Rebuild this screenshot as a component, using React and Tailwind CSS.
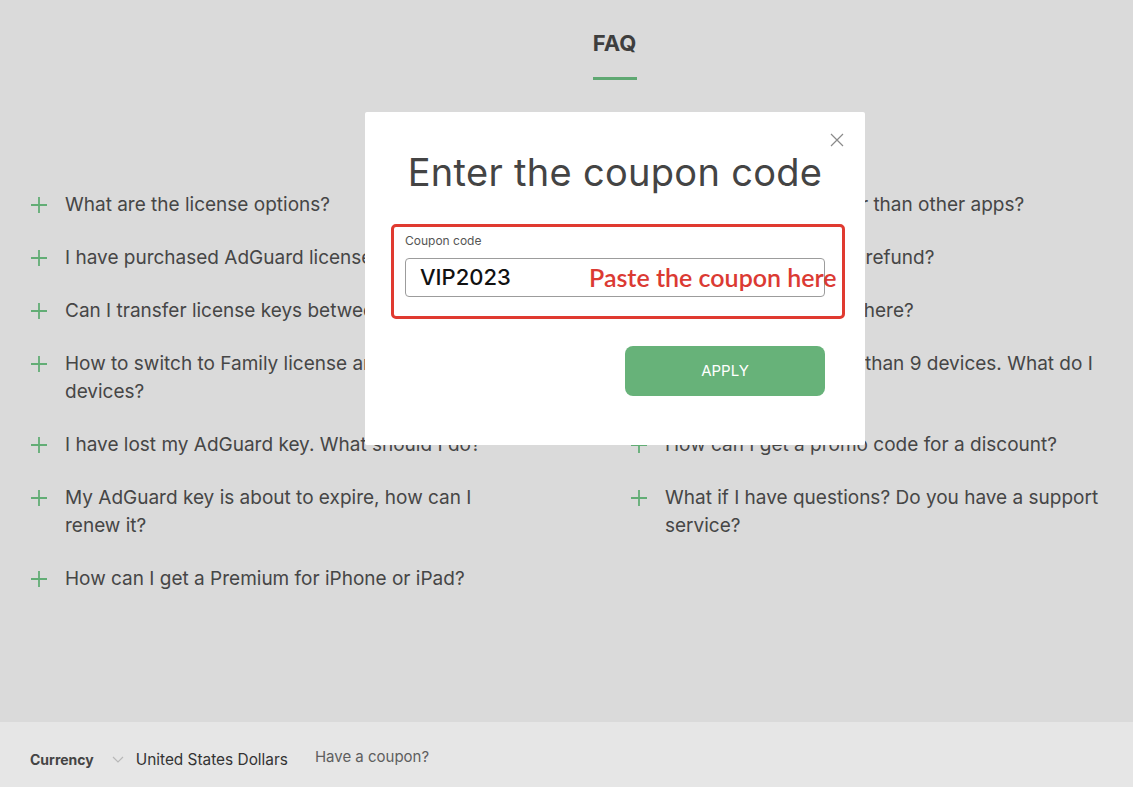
import React from 'react';

const leftItems = [
  'What are the license options?',
  'I have purchased AdGuard license. What next?',
  'Can I transfer license keys between devices?',
  'How to switch to Family license and add more devices?',
  'I have lost my AdGuard key. What should I do?',
  'My AdGuard key is about to expire, how can I renew it?',
  'How can I get a Premium for iPhone or iPad?',
];

const rightItems = [
  'Why is AdGuard better than other apps?',
  'How can I request my refund?',
  'Can I pay with PayPal here?',
  'I want to secure more than 9 devices. What do I do?',
  'How can I get a promo code for a discount?',
  'What if I have questions? Do you have a support service?',
];

function Plus() {
  return (
    <svg width="18" height="18" viewBox="0 0 18 18" className="shrink-0 mt-[5px]">
      <path d="M9 1v16M1 9h16" stroke="#62ad75" strokeWidth="1.8" fill="none" />
    </svg>
  );
}

function FaqItem({ text }) {
  return (
    <div className="flex gap-[17px]">
      <Plus />
      <span className="w-[445px] text-[19px] leading-[28px] text-[#464646]">{text}</span>
    </div>
  );
}

export default function App() {
  return (
    <div
      className="relative h-[787px] w-[1133px] overflow-hidden bg-[#dadada] flex flex-col"
      style={{ fontFamily: 'Inter, "Noto Sans", sans-serif' }}
    >
      <div className="flex-1">
        <div className="flex flex-col items-center pt-[29px] pl-[96px]">
          <h2 className="text-[22px] leading-[28px] font-bold text-[#3e3e3e]">FAQ</h2>
          <div className="mt-[20px] h-[3px] w-[44px] bg-[#5fa872]" />
        </div>
        <div className="grid grid-cols-[480px_480px] gap-x-[120px] pl-[30px] pt-[111px]">
          <div className="flex flex-col gap-[25px]">
            {leftItems.map((t) => (
              <FaqItem key={t} text={t} />
            ))}
          </div>
          <div className="flex flex-col gap-[25px]">
            {rightItems.map((t) => (
              <FaqItem key={t} text={t} />
            ))}
          </div>
        </div>
      </div>

      <footer className="h-[65px] bg-[#e6e6e6] flex items-center pl-[30px] pt-[10px] text-[15.4px]">
        <span className="text-[14px] font-bold text-[#444]">Currency</span>
        <svg width="12" height="8" viewBox="0 0 12 8" className="ml-[18px] mr-[12px]">
          <path d="M1 1l5 5 5-5" stroke="#b8b8b8" strokeWidth="1.2" fill="none" />
        </svg>
        <span className="text-[#333]">United States Dollars</span>
        <span className="ml-[27px] -mt-[4px] text-[15px] text-[#5e5e5e]">Have a coupon?</span>
      </footer>

      <div className="absolute left-[365px] top-[112px] w-[500px] bg-white rounded-[2px] px-[40px] pt-[37px] pb-[49px]">
        <button className="absolute right-[21px] top-[21px] w-[14px] h-[14px]">
          <svg width="14" height="14" viewBox="0 0 14 14">
            <path d="M1 1l12 12M13 1L1 13" stroke="#8a8a8a" strokeWidth="1.2" fill="none" />
          </svg>
        </button>
        <h1 className="text-center whitespace-nowrap text-[38px] leading-[46px] text-[#444] tracking-[0.3px]">
          Enter the coupon code
        </h1>
        <div className="mt-[38px] text-[12px] leading-[16px] text-[#555]">Coupon code</div>
        <div className="mt-[9px] h-[39px] border border-[#9c9c9c] rounded-[4px] flex items-center pl-[14px]">
          <span className="text-[22px] font-medium text-[#111]">VIP2023</span>
        </div>
        <div className="mt-[49px] flex justify-end">
          <button className="w-[200px] h-[50px] rounded-[8px] bg-[#67b279] text-white text-[15px]">
            APPLY
          </button>
        </div>

        <div className="absolute left-[26px] top-[112px] w-[454px] h-[95px] border-[3px] border-[#e03a30] rounded-[5px]" />
        <div
          className="absolute left-[224px] top-[149px] text-[25px] leading-[32px] text-[#db3a33] font-semibold whitespace-nowrap"
          style={{ fontFamily: 'Lato, "Open Sans", sans-serif' }}
        >
          Paste the coupon here
        </div>
      </div>
    </div>
  );
}
